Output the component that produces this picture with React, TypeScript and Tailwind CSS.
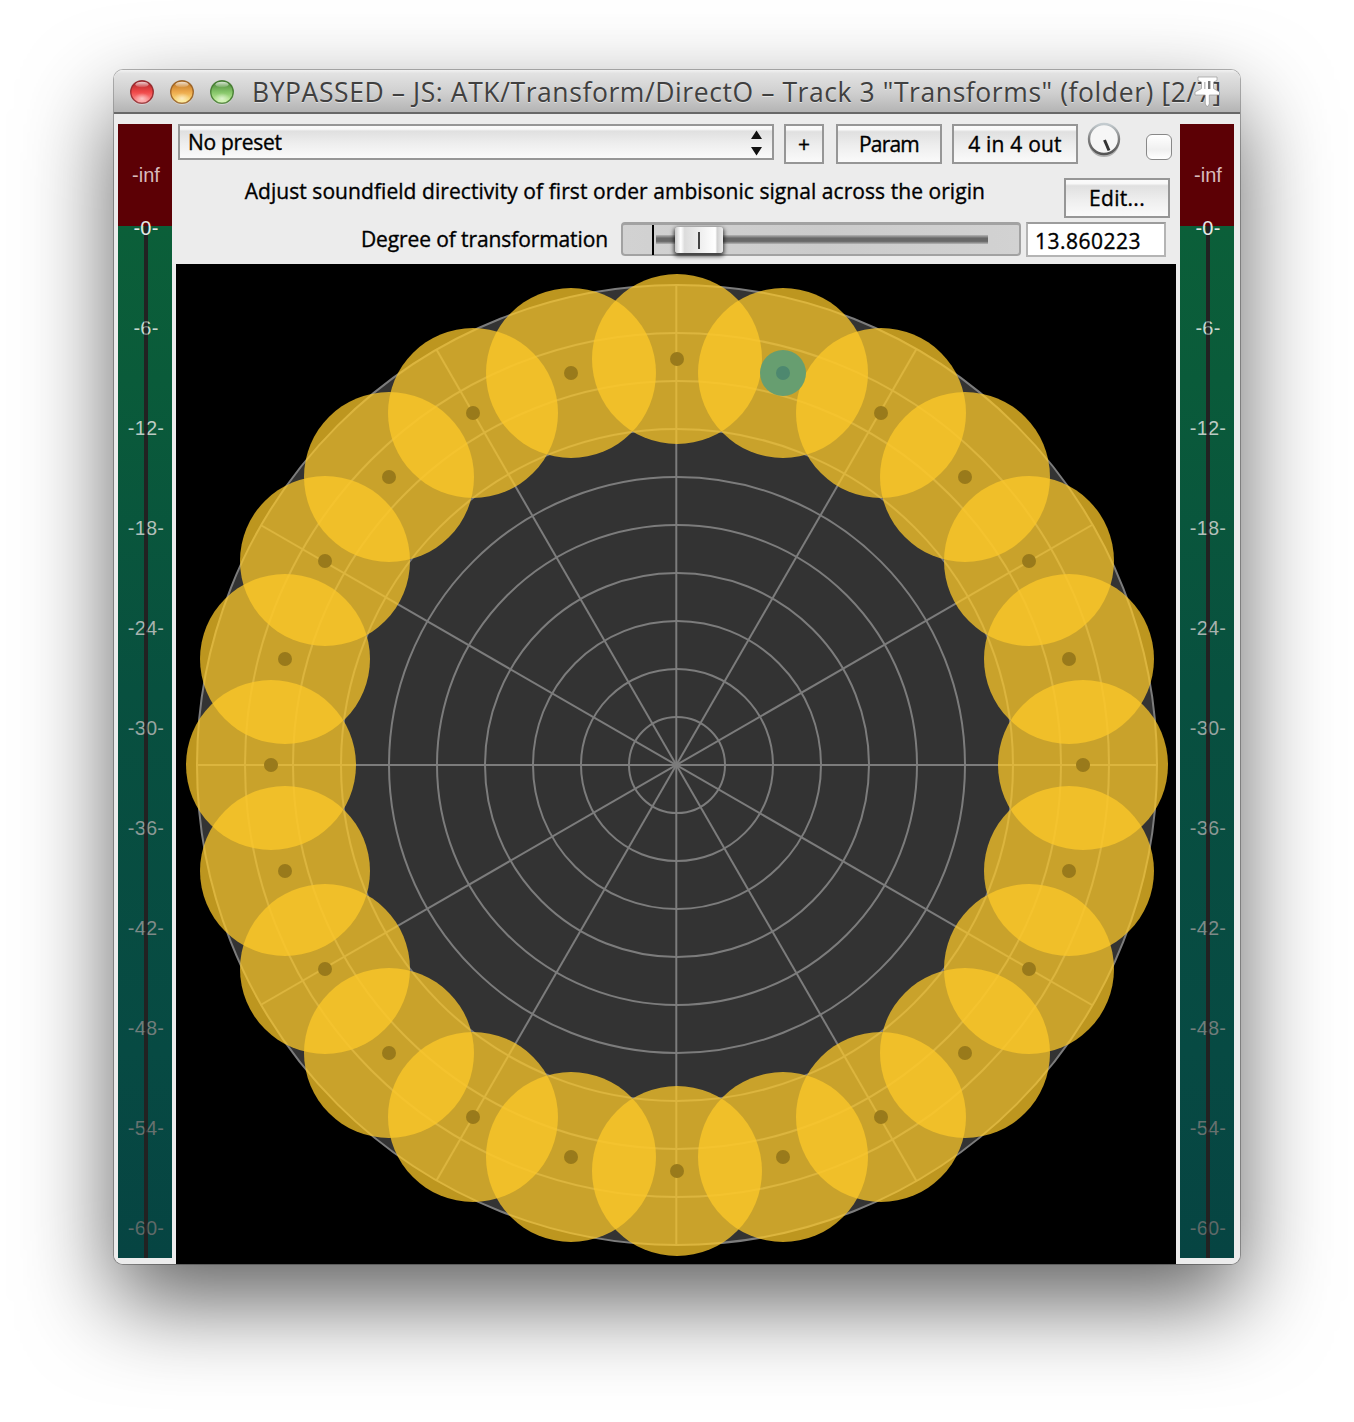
import React from "react";

const levels = [0, 6, 12, 18, 24, 30, 36, 42, 48, 54, 60];
const levelColors = ["#e4e9e6", "#c6d6ce", "#bccbc4", "#b3c0bb", "#a8b3af", "#98a5a1", "#8b9895", "#7e8a88", "#717d7b", "#67716f", "#5e6968"];

const buttonFace =
  "pt-[2px] border-2 border-[#969696] bg-[linear-gradient(to_bottom,#fbfbfb_0%,#f8f8f8_10%,#e0e0e0_16%,#eeeeee_55%,#fafafa_100%)] flex items-center justify-center";

function Light({ id, rim, dark, mid, glow }: { id: string; rim: string; dark: string; mid: string; glow: string }) {
  return (
    <svg width="26" height="26" viewBox="0 0 26 26">
      <defs>
        <linearGradient id={id} x1="0" y1="0" x2="0" y2="1">
          <stop offset="0" stopColor={dark} />
          <stop offset="0.5" stopColor={mid} />
          <stop offset="1" stopColor={glow} />
        </linearGradient>
        <radialGradient id={id + "g"} cx="0.5" cy="0.5" r="0.5">
          <stop offset="0" stopColor="#fff" stopOpacity="0.55" />
          <stop offset="1" stopColor="#fff" stopOpacity="0" />
        </radialGradient>
        <linearGradient id={id + "h"} x1="0" y1="0" x2="0" y2="1">
          <stop offset="0" stopColor="#fff" stopOpacity="0.8" />
          <stop offset="1" stopColor="#fff" stopOpacity="0.1" />
        </linearGradient>
      </defs>
      <circle cx="13" cy="13.8" r="12" fill="#fff" opacity="0.45" />
      <circle cx="13" cy="13" r="11.3" fill={`url(#${id})`} stroke={rim} strokeWidth="1.4" strokeOpacity="0.85" />
      <ellipse cx="13" cy="19.5" rx="8" ry="5.5" fill={`url(#${id}g)`} />
      <ellipse cx="13" cy="5.5" rx="6.6" ry="2.8" fill={`url(#${id}h)`} />
    </svg>
  );
}

function Meter() {
  return (
    <div className="relative w-[54px] h-[1134px] shrink-0 flex flex-col font-['Liberation_Sans'] text-[20px]">
      <div className="h-[102px] bg-[#5c0005] flex items-center justify-center pl-[2px] text-[#d8bcbd]">-inf</div>
      <div className="grow bg-[linear-gradient(to_bottom,#0b5f39_0%,#0a5b3a_15%,#08503f_45%,#074a43_80%,#064442_100%)]" />
      <div className="absolute left-[26px] top-[102px] bottom-0 w-1 bg-[#222]" />
      <div className="absolute left-px top-[92px] w-full">
        {levels.map((n, i) => (
          <div key={n} className="h-[100px] leading-[24px] text-center tracking-[0.2px]" style={{ color: levelColors[i] }}>
            -{n}-
          </div>
        ))}
      </div>
      <div className="absolute left-[26px] top-[114px] bottom-0 w-1 bg-[#222]/50" />
    </div>
  );
}

// Horizontal/vertical offsets of the sources for every 15 degrees of the first quadrant.
const OFFSETS = [0, 106, 204, 288, 352, 392, 406];

function ringPoint(i: number): [number, number] {
  const q = Math.floor(i / 6);
  const s = OFFSETS[i % 6];
  const c = OFFSETS[6 - (i % 6)];
  if (q === 0) return [501 + s, 501 - c];
  if (q === 1) return [501 + c, 501 + s];
  if (q === 2) return [501 - s, 501 + c];
  return [501 - c, 501 - s];
}

function Soundfield() {
  const points = Array.from({ length: 24 }, (_, i) => ringPoint(i));
  return (
    <svg width="1000" height="1000" viewBox="0 0 1000 1000" className="block bg-black">
      <circle cx="501" cy="501" r="480" fill="#333" />
      <g fill="none" stroke="#7c7c7c" strokeWidth="2">
        {Array.from({ length: 10 }, (_, i) => (
          <circle key={i} cx="501" cy="501" r={48 * (i + 1)} />
        ))}
        {Array.from({ length: 6 }, (_, i) => {
          const a = (i * Math.PI) / 6;
          const dx = 480 * Math.cos(a);
          const dy = 480 * Math.sin(a);
          return <line key={i} x1={500.3 - dx} y1={501 - dy} x2={500.3 + dx} y2={501 + dy} />;
        })}
      </g>
      {points.map(([x, y], i) => (
        <circle key={i} cx={x} cy={y} r="85" fill="#fcc82a" fillOpacity="0.75" />
      ))}
      <circle cx={points[1][0]} cy={points[1][1]} r="23" fill="#679e70" />
      {points.map(([x, y], i) => (
        <circle key={i} cx={x} cy={y} r="7" fill={i === 1 ? "#4d886f" : "#997a1b"} />
      ))}
    </svg>
  );
}

function Pin() {
  return (
    <svg width="30" height="34" viewBox="0 0 30 34" className="absolute right-[18px] top-[5px]">
      <path
        d="M6 2 H25 V5.5 L21.5 7 V13.5 L27.5 17 V20 H17.3 V29 L15.3 32 L13.3 29 V20 H3 V17 L9.5 13.5 V7 L6 5.5 Z"
        fill="#fff"
        stroke="#999"
        strokeOpacity="0.7"
        strokeWidth="1"
      />
      <path d="M17.2 6 V14" stroke="#777" strokeWidth="2.4" />
      <path d="M12.8 7 V14" stroke="#bbb" strokeWidth="1.4" />
    </svg>
  );
}

function Slider() {
  return (
    <div className="relative w-[400px] h-[34px] rounded-[4px] border-2 border-[#a2a2a2] border-t-[3px] bg-[linear-gradient(to_right,#d2d2d2,#cbcbcb_50%,#d2d2d2)]">
      <div className="absolute left-[33px] top-[10px] w-[332px] h-[9px] bg-[linear-gradient(to_bottom,#b5b5b5,#686868_35%,#686868_70%,#b5b5b5)]" />
      <div className="absolute left-[29px] top-0 w-[2px] h-[30px] bg-black" />
      <div className="absolute left-[52px] top-[2px] w-[48px] h-[26px] rounded-[3px] flex items-center justify-center bg-[linear-gradient(to_right,#c8c8c8_0%,#fff_12%,#dcdcdc_20%,#f2f2f2_60%,#ffffff_84%,#d0d0d0_88%,#eee_100%)] shadow-[0_2px_4px_1px_rgba(0,0,0,0.75)]">
        <div className="w-[2px] h-[17px] bg-[#444]" />
      </div>
    </div>
  );
}

export default function App() {
  return (
    <div className="w-[1354px] h-[1422px] bg-white pt-[70px] pl-[114px] overflow-hidden font-['Open_Sans',sans-serif] text-black">
      <div className="w-[1126px] h-[1194px] rounded-[9px] shadow-[0_0_0_1px_rgba(0,0,0,0.28),0_38px_90px_rgba(0,0,0,0.62)]">
        <div className="w-full h-full rounded-[9px] overflow-hidden bg-[#ececec] flex flex-col">
          <div className="relative h-[44px] shrink-0 border-b-2 border-[#686868] bg-[linear-gradient(to_bottom,#f2f2f2_0%,#e2e2e2_8%,#cfcfcf_55%,#b4b4b4_100%)] flex items-center pl-[15px]">
            <div className="flex gap-[14px] pt-[2px]">
              <Light id="red" rim="#8c2226" dark="#a82228" mid="#f04848" glow="#ffa0a0" />
              <Light id="amber" rim="#93591c" dark="#b8701e" mid="#eda94c" glow="#fff08c" />
              <Light id="green" rim="#3c7428" dark="#467f34" mid="#84c468" glow="#d0f8a8" />
            </div>
            <div className="ml-[17px] pt-[1px] text-[26.5px] leading-[36px] text-[#404040] whitespace-nowrap tracking-[0.58px] [text-shadow:0_1px_0_rgba(255,255,255,0.5)]">
              BYPASSED – JS: ATK/Transform/DirectO – Track 3 "Transforms" (folder) [2/7]
            </div>
            <Pin />
          </div>
          <div className="flex grow pt-[10px] px-1 gap-1">
            <Meter />
            <div className="w-[1000px] shrink-0 flex flex-col text-[21px] [-webkit-text-stroke:0.35px_#000]">
              <div className="h-[140px] shrink-0 pl-[2px]">
                <div className="flex items-start">
                  <div className="w-[596px] h-[36px] border-2 border-[#969696] bg-[linear-gradient(to_bottom,#fbfbfb_0%,#f8f8f8_10%,#e0e0e0_16%,#eeeeee_55%,#fafafa_100%)] flex items-center justify-between pl-2 pr-[10px]">
                    <span className="pt-[2px] tracking-[-0.3px]">No preset</span>
                    <svg width="11" height="26" viewBox="0 0 11 26" className="mt-[2px]">
                      <path d="M5.5 0.5 L11 9 H0 Z M5.5 25.5 L11 17 H0 Z" fill="#111" stroke="none" />
                    </svg>
                  </div>
                  <div className={`ml-[10px] w-[40px] h-[40px] ${buttonFace}`}>+</div>
                  <div className={`ml-[12px] w-[106px] h-[40px] tracking-[-0.8px] ${buttonFace}`}>Param</div>
                  <div className={`ml-[10px] w-[126px] h-[40px] tracking-[0.2px] ${buttonFace}`}>4 in 4 out</div>
                  <svg width="36" height="38" viewBox="0 0 36 38" className="ml-[8px] -mt-[3px]">
                    <defs>
                      <linearGradient id="knob" x1="0" y1="0" x2="0" y2="1">
                        <stop offset="0" stopColor="#c4ccd0" />
                        <stop offset="0.5" stopColor="#808080" />
                        <stop offset="1" stopColor="#555" />
                      </linearGradient>
                    </defs>
                    <circle cx="18" cy="20.5" r="15.5" fill="#000" opacity="0.25" />
                    <circle cx="18" cy="18" r="15" fill="#f6f6f6" stroke="url(#knob)" strokeWidth="2.4" />
                    <path d="M18.5 19 L23 29.5" stroke="#333" strokeWidth="3" />
                  </svg>
                  <div className="ml-[24px] mt-[10px] w-[26px] h-[26px] rounded-[6px] border-[1.5px] border-[#888] bg-[linear-gradient(to_bottom,#fff,#f0f0f0_60%,#fff)]" />
                </div>
                <div className="flex items-start h-[44px] mt-[14px]">
                  <div className="w-[807px] -mt-[3px] text-right leading-[32px] tracking-[0.06px]">
                    Adjust soundfield directivity of first order ambisonic signal across the origin
                  </div>
                  <div className={`ml-[79px] w-[106px] h-[40px] tracking-[0.3px] ${buttonFace}`}>Edit...</div>
                </div>
                <div className="flex items-start">
                  <div className="w-[430px] pt-px text-right leading-[32px] tracking-[-0.1px]">Degree of transformation</div>
                  <div className="ml-[13px]">
                    <Slider />
                  </div>
                  <div className="ml-[5px] w-[140px] h-[35px] border-2 border-[#b4b4b4] border-t-[#9c9c9c] bg-white pl-[7px] leading-[34px] tracking-[0.5px]">13.860223</div>
                </div>
              </div>
              <Soundfield />
            </div>
            <Meter />
          </div>
        </div>
      </div>
    </div>
  );
}
